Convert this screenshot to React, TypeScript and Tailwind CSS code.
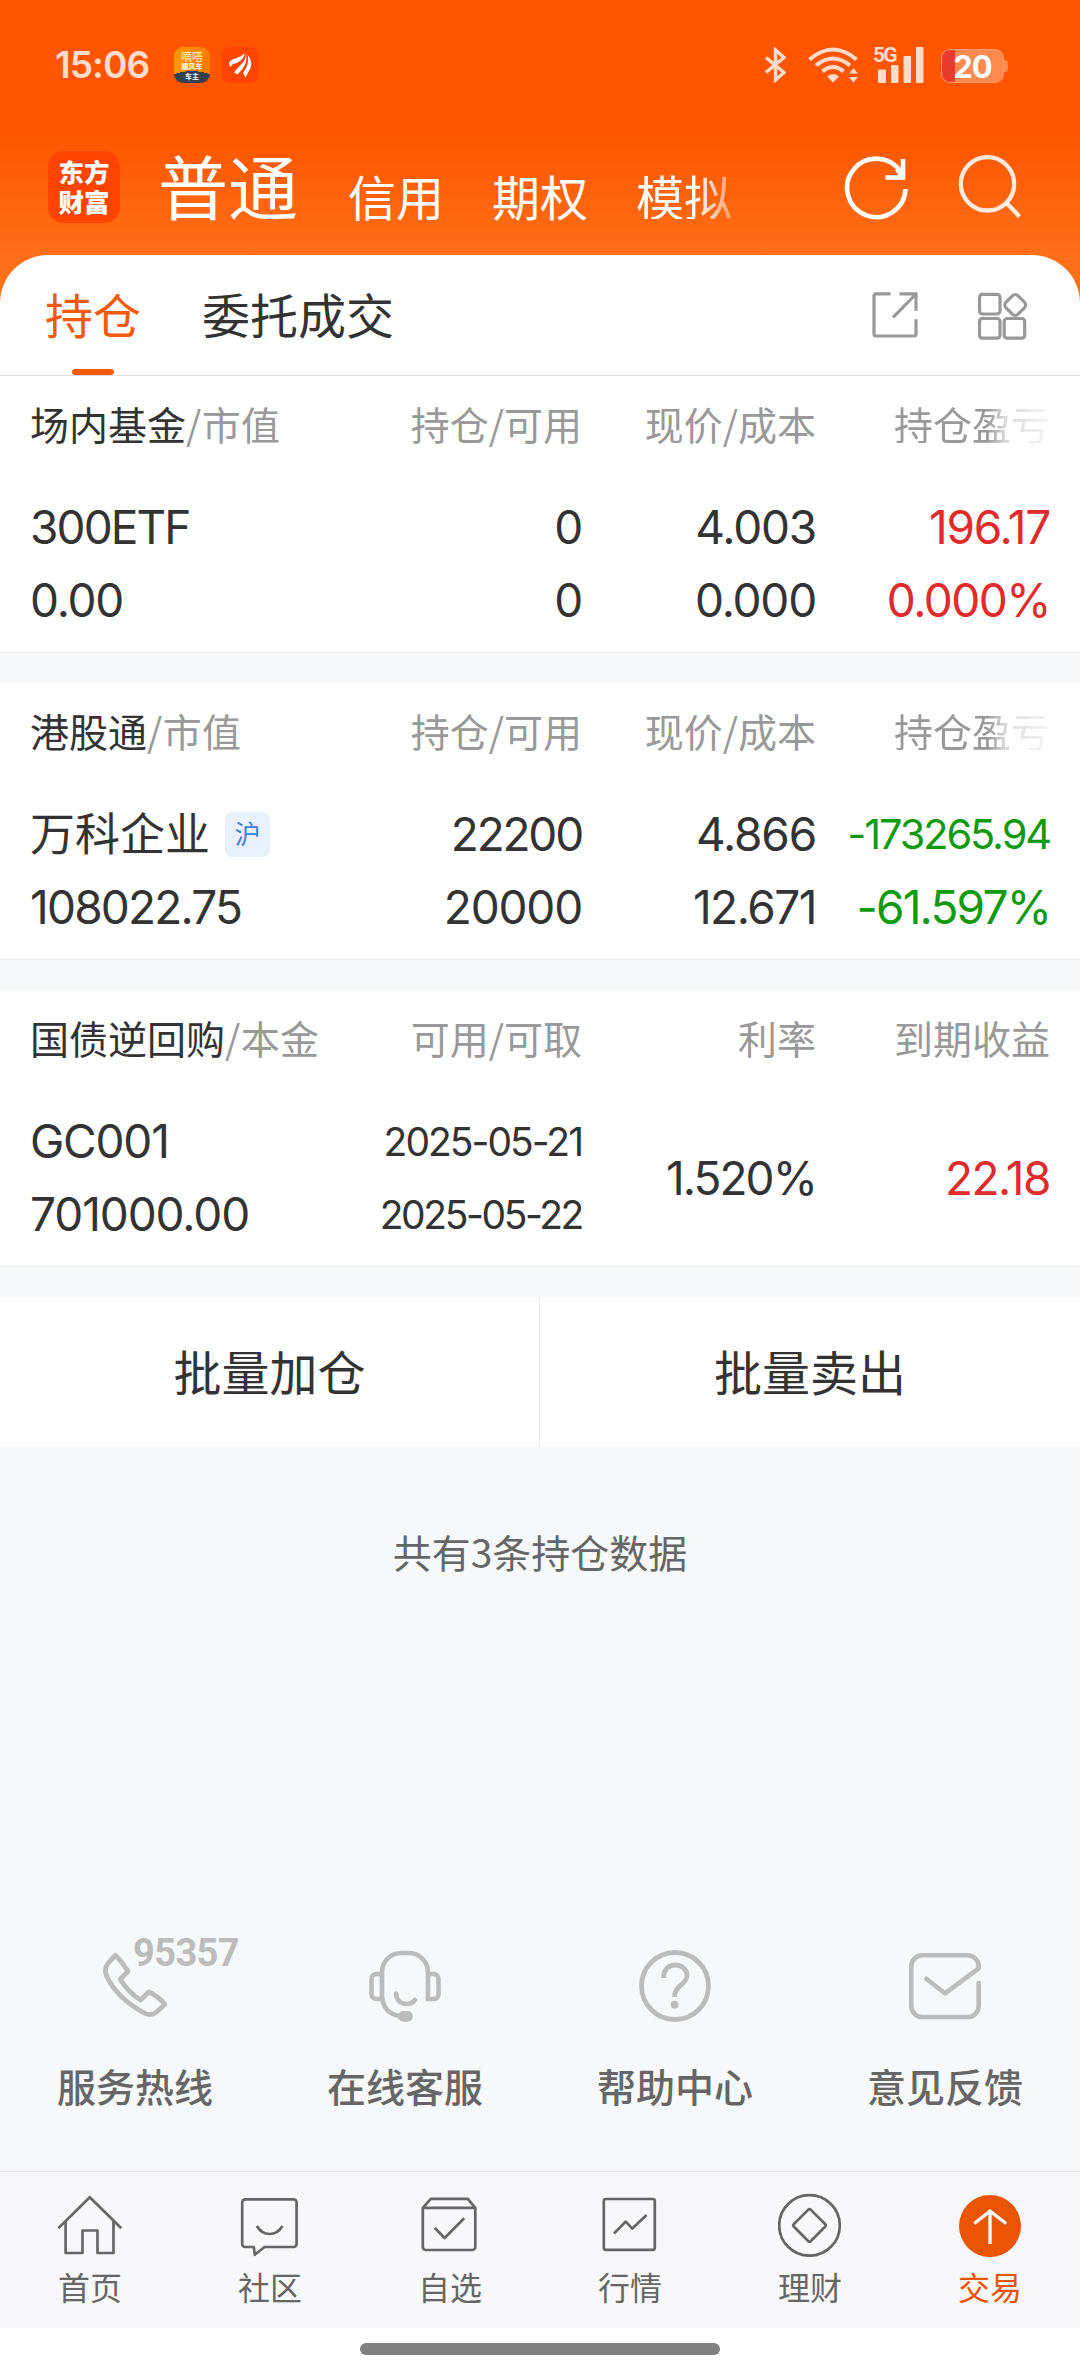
import type { ReactNode } from "react";

const services = [
  { label: "服务热线", icon: <PhoneIcon /> },
  { label: "在线客服", icon: <HeadsetIcon /> },
  { label: "帮助中心", icon: <HelpIcon /> },
  { label: "意见反馈", icon: <MailIcon /> },
];

const navItems = [
  { label: "首页", icon: <HomeIcon /> },
  { label: "社区", icon: <ChatIcon /> },
  { label: "自选", icon: <BoxIcon /> },
  { label: "行情", icon: <ChartIcon /> },
  { label: "理财", icon: <FinanceIcon /> },
  { label: "交易", icon: <TradeIcon />, active: true },
];

/* ---------- icons ---------- */

function PhoneIcon() {
  return (
    <div className="relative w-[72px] h-[72px]">
      <svg className="w-[72px] h-[72px]" viewBox="-4 -1 72 72" fill="none" stroke="#bcbcbc" strokeWidth="4.8" strokeLinejoin="round">
        <path d="M12.4 4.2Q19.8 11.5 25 20.3L17.2 28.3Q25.5 41.5 37.5 49L45.8 41Q55 45 62 53.3L53.5 61Q47.5 66 40 61.3Q13.5 46.5 3.6 25Q1 18.5 4.3 13.5Q7.5 9 12.4 4.2Z" />
      </svg>
      <span className="absolute left-[34px] -top-[16px] font-['Roboto'] font-bold text-[38px] leading-[38px] tracking-[-0.6px] text-[#bcbcbc]">95357</span>
    </div>
  );
}

function HeadsetIcon() {
  return (
    <svg className="w-[72px] h-[72px]" viewBox="0 0 72 72" fill="none" stroke="#bcbcbc" strokeWidth="4.6" strokeLinecap="round" strokeLinejoin="round">
      <path d="M59 49V22a19 19 0 0 0-19-19h-8a19 19 0 0 0-19 19V47Q15 64 31 66" />
      <path d="M13 24H7.5a5 5 0 0 0-5 5v15a5 5 0 0 0 5 5H13M59 24h5.5a5 5 0 0 1 5 5v15a5 5 0 0 1-5 5H59" />
      <path d="M27 43.5C27.5 50 31.5 54 37.5 54Q43 54 46 50" />
      <rect x="29.3" y="61" width="14.4" height="10.7" rx="5" fill="#bcbcbc" stroke="none" />
    </svg>
  );
}

function HelpIcon() {
  return (
    <svg className="w-[72px] h-[72px]" viewBox="0 0 72 72" fill="none" stroke="#bcbcbc" strokeWidth="4.8">
      <circle cx="36" cy="36" r="33.5" />
      <path d="M24.8 28V25.5a11.6 10.5 0 0 1 23.2 0C48 34.5 35.4 35.5 35.4 47" />
      <circle cx="35.6" cy="54.7" r="3.9" fill="#bcbcbc" stroke="none" />
    </svg>
  );
}

function MailIcon() {
  return (
    <svg className="w-[72px] h-[72px]" viewBox="0 0 72 72" fill="none" stroke="#bcbcbc" strokeWidth="4.6" strokeLinecap="round" strokeLinejoin="round">
      <path d="M69.7 33V56a11 11 0 0 1-11 11H13.3a11 11 0 0 1-11-11V16.3a11 11 0 0 1 11-11h45.4a11 11 0 0 1 11 11V18.3L36 43.3L17.3 28.7" />
    </svg>
  );
}

function NavSvg({ children }: { children: ReactNode }) {
  return (
    <svg className="w-16 h-16" viewBox="0 0 64 64" fill="none" stroke="#666" strokeWidth="2.7" strokeLinejoin="round">
      {children}
    </svg>
  );
}

function HomeIcon() {
  return (
    <NavSvg>
      <path d="M0.3 35.3L31.8 4.2L63.3 35.3" />
      <path d="M7.6 28V60H24.5V37.5H39.5V60H55.5V28" />
    </NavSvg>
  );
}

function ChatIcon() {
  return (
    <NavSvg>
      <path d="M7.2 6.4H55.6a3 3 0 0 1 3 3V51a3 3 0 0 1-3 3H26.5L16.8 61.8L15.8 54H7.2a3 3 0 0 1-3-3V9.4a3 3 0 0 1 3-3Z" />
      <path d="M18.8 33Q23.5 41 31.6 41T44.5 33" />
    </NavSvg>
  );
}

function BoxIcon() {
  return (
    <NavSvg>
      <path d="M4.8 14.8L12.8 5.8H49.8L57.3 14.8V54a3 3 0 0 1-3 3H7.8a3 3 0 0 1-3-3ZM4.8 14.8H57.3" />
      <path d="M16.6 34.7L26.6 45L46.2 25.3" />
    </NavSvg>
  );
}

function ChartIcon() {
  return (
    <NavSvg>
      <rect x="5.8" y="6" width="51" height="50.8" rx="2" />
      <path d="M16 40.5L27.7 28.6L34.3 35.6L48.6 22" />
    </NavSvg>
  );
}

function FinanceIcon() {
  return (
    <NavSvg>
      <circle cx="31.5" cy="32.4" r="30.3" />
      <rect x="19.5" y="20.4" width="24" height="24" rx="2" transform="rotate(45 31.5 32.4)" />
    </NavSvg>
  );
}

function TradeIcon() {
  return (
    <svg className="w-16 h-16" viewBox="0 0 64 64" fill="none" stroke="#fff" strokeWidth="3.3">
      <circle cx="32" cy="33" r="31" fill="#e95504" stroke="none" />
      <path d="M32 18V51M16.2 30.5L32 18.2L48.2 30.5" />
    </svg>
  );
}

/* ---------- status bar ---------- */

function StatusBar() {
  return (
    <div className="h-[130px] pt-[47px] pl-[55px] pr-[72px] flex items-start text-[#ffdccb]">
      <span className="w-[119px] font-['Inter'] font-semibold text-[37px] leading-[36px] tracking-[-0.9px]">15:06</span>
      <div className="w-9 h-9 rounded-[9px] bg-[radial-gradient(ellipse_26px_12px_at_18px_36px,#34424f_98%,transparent_100%),linear-gradient(to_right,#ff9a00,#ff7a00)] flex flex-col items-center">
        <span className="mt-[4px] text-[11px] leading-[11px] text-[#fff0d0]">嘀嗒</span>
        <span className="text-[7px] leading-[9px] font-bold text-white">顺风车</span>
        <span className="text-[7px] leading-[10px] font-bold text-white">车主</span>
      </div>
      <div className="ml-3 w-9 h-9 rounded-[8px] bg-[#ff4300]">
        <svg className="w-9 h-9" viewBox="0 0 36 36" fill="#fff">
          <path d="M7 16.5C7.5 11 18 12 22.5 6C22.5 12 16.5 16 11 17L8 20Z" />
          <path d="M23.3 6C25.5 14 17 18.5 12 25.5L15.5 27.5C21 22 27 15 23.3 6Z" />
          <path d="M25.5 7.5C29.5 13 30 17 28.5 21L23.5 30.5L21 26C25 20 27.5 15 25.5 7.5Z" />
        </svg>
      </div>
      <div className="ml-auto flex items-start">
        <svg className="w-[21px] h-9" viewBox="0 0 21 36" fill="none" stroke="#ffdccb" strokeWidth="3.4">
          <path d="M1 10.5L19 25.5L10.5 33V3L19 10.5L1 25.5" />
        </svg>
        <svg className="ml-[22px] w-[52px] h-9" viewBox="0 0 52 36" fill="none" stroke="#ffdccb" strokeWidth="4">
          <path d="M1.5 12.5Q25 -7.5 48.5 12.5M8 18.5Q25 4.5 42 18.5M14.5 24.5Q25 15.5 35.5 24.5" />
          <path d="M19 29.5Q25 24.5 31 29.5L25 35.5Z" fill="#ffdccb" stroke="none" />
          <path d="M41 26.5L45.5 21L50 26.5ZM41 30L45.5 35.5L50 30Z" fill="#ffdccb" stroke="none" />
        </svg>
        <div className="relative ml-[13px] w-[51px] h-9">
          <span className="absolute left-0 -top-[1px] font-['Roboto'] font-bold text-[21px] leading-[18px] tracking-[-1.8px]">5G</span>
          <svg className="w-[51px] h-9" viewBox="0 0 51 36" fill="#ffdccb">
            <rect x="5" y="22.5" width="8" height="13.5" rx="1" />
            <rect x="18" y="18" width="7.5" height="18" rx="1" />
            <rect x="30.5" y="9" width="7.5" height="27" rx="1" />
            <rect x="43" y="0" width="7.5" height="36" rx="1" />
          </svg>
        </div>
        <div className="ml-[17px] mt-[2px] flex items-center">
          <div className="w-[63px] h-[34px] rounded-[9px] border border-[#ff9d6b] bg-[linear-gradient(to_right,#ea3b30_13px,#ff8a50_13px)] text-center font-['Inter'] font-bold text-[31px] leading-[33px] tracking-[-1px] text-white">
            20
          </div>
          <div className="w-[4px] h-[12px] rounded-r-[3px] bg-[#ff8a50]" />
        </div>
      </div>
    </div>
  );
}

function Header() {
  return (
    <div className="h-[125px] pl-12 pr-[58px] flex items-start text-white">
      <div className="mt-[21px] w-[72px] h-[72px] rounded-[16px] bg-[#ff4300] flex flex-col items-center pt-[5px] font-black text-[25.5px] leading-[30px]">
        <span>东方</span>
        <span>财富</span>
      </div>
      <span className="ml-[38px] mt-[20px] text-[70px] leading-[70px]">普通</span>
      <div className="ml-[50px] mt-[41px] flex gap-12 text-[48px] leading-[48px]">
        <span>信用</span>
        <span>期权</span>
        <span className="mask-[linear-gradient(to_right,#000_62%,rgba(0,0,0,0.35)_100%)]">模拟</span>
      </div>
      <svg className="ml-auto mt-[24px] w-[66px] h-[68px]" viewBox="0 0 66 68" fill="none" stroke="#fff" strokeWidth="4.6">
        <path d="M62.5 35A29.2 29.2 0 1 1 57.5 17.5M60 5V23.5H42.5M59.5 23L54 15" />
      </svg>
      <svg className="ml-[49px] mt-[24px] w-[64px] h-[68px]" viewBox="0 0 64 68" fill="none" stroke="#fff" strokeOpacity="0.87" strokeWidth="4.3">
        <circle cx="29.5" cy="29.8" r="26.7" />
        <path d="M48.5 49L61.5 62.5" />
      </svg>
    </div>
  );
}

function TabBar() {
  return (
    <div className="h-[121px] rounded-t-[48px] bg-white border-b border-[#dfdfdf] pl-[45px] pr-[51px] flex items-start text-[48px] leading-[48px]">
      <div className="flex h-[120px] flex-col items-center pt-[34px]">
        <span className="text-[#f5590a]">持仓</span>
        <div className="mt-auto w-[42px] h-[6px] rounded-full bg-[#f5590a]" />
      </div>
      <span className="ml-[61px] mt-[34px]">委托成交</span>
      <svg className="ml-auto mt-[37px] w-[48px] h-[48px]" viewBox="0 0 48 48" fill="none" stroke="#999" strokeWidth="3.2">
        <path d="M18.5 1.8H4a2 2 0 0 0-2 2V42a2 2 0 0 0 2 2H42a2 2 0 0 0 2-2V27.3" />
        <path d="M27.5 1.8H44V18.7M21 25.3L44 2" />
      </svg>
      <svg className="ml-[57px] mt-[37px] w-[52px] h-[50px]" viewBox="0 0 52 50" fill="none" stroke="#999" strokeWidth="3.2">
        <rect x="2.5" y="2.3" width="20.5" height="19.7" rx="3" />
        <rect x="2.5" y="26.5" width="20.5" height="19.7" rx="3" />
        <rect x="27.2" y="26.5" width="20.5" height="19.7" rx="3" />
        <rect x="29.7" y="4.5" width="17" height="17" rx="4" transform="rotate(45 38.2 13)" />
      </svg>
    </div>
  );
}

/* ---------- holdings ---------- */

type SectionProps = {
  title: string;
  sub: string;
  heads: string[];
  fade?: boolean;
  children: ReactNode;
};

function Section({ title, sub, heads, fade, children }: SectionProps) {
  return (
    <section className="h-[277px] bg-white border-b border-[#ebebeb] px-[30px] mb-[30px]">
      <div className="pt-[27px] grid grid-cols-[318px_234px_234px_234px] text-[39px] leading-[40px] text-[#999] text-right">
        <div className="text-left whitespace-nowrap">
          <span className="text-[#333]">{title}</span>
          <span className="tracking-[0.4px]">/{sub}</span>
        </div>
        <span>{heads[0]}</span>
        <span>{heads[1]}</span>
        <span className={fade ? "ml-auto mask-[linear-gradient(to_right,#000_60%,rgba(0,0,0,0.38)_71%,rgba(0,0,0,0.08)_100%)]" : ""}>{heads[2]}</span>
      </div>
      <div className="mt-[48px] grid grid-cols-[318px_234px_234px_234px] font-['Inter','Noto_Sans_CJK_SC',sans-serif] text-[46px] leading-[73px] tracking-[-1.2px] text-right">
        {children}
      </div>
    </section>
  );
}

function Pair({ top, bottom, className = "" }: { top: ReactNode; bottom: ReactNode; className?: string }) {
  return (
    <div className={"flex flex-col whitespace-nowrap " + className}>
      <div className="h-[73px]">{top}</div>
      <div className="h-[73px]">{bottom}</div>
    </div>
  );
}

export default function App() {
  return (
    <div className="w-[1080px] h-[2376px] flex flex-col overflow-hidden bg-[#f6f8fa] text-[#333] font-['Noto_Sans_CJK_SC',sans-serif]">
      <div className="bg-[linear-gradient(to_bottom,#ff5500_0px,#ff5500_132px,#ff6f18_255px,#ff6f18_376px)]">
        <StatusBar />
        <Header />
        <TabBar />
      </div>

      <Section title="场内基金" sub="市值" heads={["持仓/可用", "现价/成本", "持仓盈亏"]} fade>
        <Pair top={<span className="tracking-[-1.9px]">300ETF</span>} bottom="0.00" className="text-left" />
        <Pair top="0" bottom="0" />
        <Pair top="4.003" bottom="0.000" />
        <Pair top="196.17" bottom={<span className="tracking-[-1.5px]">0.000%</span>} className="text-[#df2b2b]" />
      </Section>

      <Section title="港股通" sub="市值" heads={["持仓/可用", "现价/成本", "持仓盈亏"]} fade>
        <Pair
          top={
            <div className="h-[73px] flex items-center tracking-normal">
              <span className="text-[45px]">万科企业</span>
              <span className="ml-[15px] w-[45px] h-[45px] rounded-[7px] bg-[#e9f2fc] text-[#3c82d8] text-[26px] leading-[45px] text-center">沪</span>
            </div>
          }
          bottom="108022.75"
          className="text-left tracking-[-1.8px]"
        />
        <Pair top={<span className="tracking-[-2.2px]">22200</span>} bottom="20000" />
        <Pair top="4.866" bottom={<span className="tracking-[-1.5px]">12.671</span>} />
        <Pair
          top={<span className="block text-[41.5px] tracking-[-2.1px]">-173265.94</span>}
          bottom="-61.597%"
          className="text-[#0f9a0f] tracking-[-1.8px]"
        />
      </Section>

      <Section title="国债逆回购" sub="本金" heads={["可用/可取", "利率", "到期收益"]}>
        <Pair top="GC001" bottom={<span className="tracking-[-1.1px]">701000.00</span>} className="text-left" />
        <Pair top={<span className="tracking-[-2px]">2025-05-21</span>} bottom={<span className="tracking-[-2.4px]">2025-05-22</span>} className="text-[39px]" />
        <span className="self-center tracking-[-1.9px]">1.520%</span>
        <span className="self-center tracking-[-1.5px] text-[#df2b2b]">22.18</span>
      </Section>

      <div className="h-[150px] bg-white grid grid-cols-2 text-[48px] leading-[146px] text-center">
        <span className="border-r border-[#ececec]">批量加仓</span>
        <span>批量卖出</span>
      </div>

      <p className="mt-[84px] text-center text-[39px] leading-[40px] text-[#666]">共有3条持仓数据</p>

      <div className="mt-auto h-[221px] grid grid-cols-4">
        {services.map((s) => (
          <div key={s.label} className="flex flex-col items-center">
            {s.icon}
            <span className="mt-[43px] text-[39px] leading-[40px] font-medium text-[#666]">{s.label}</span>
          </div>
        ))}
      </div>

      <nav className="h-[157px] border-t border-[#e3e3e5] bg-[#f8f8fa] grid grid-cols-6 pt-[21px]">
        {navItems.map((n) => (
          <div key={n.label} className="flex flex-col items-center">
            {n.icon}
            <span className={"mt-[12px] text-[32px] leading-[34px] " + (n.active ? "text-[#e95504]" : "text-[#666]")}>{n.label}</span>
          </div>
        ))}
      </nav>
      <div className="h-12 bg-white flex justify-center pt-[15px]">
        <div className="w-[360px] h-3 rounded-full bg-[#808080]" />
      </div>
    </div>
  );
}
